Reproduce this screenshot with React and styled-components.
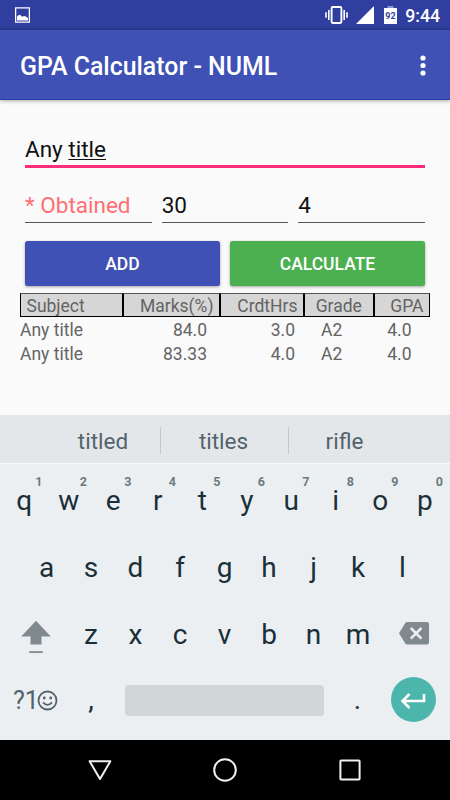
import React from "react";
import styled, { createGlobalStyle } from "styled-components";

const Global = createGlobalStyle`
  * { box-sizing: border-box; }
  body { margin: 0; font-family: Roboto, "Liberation Sans", sans-serif; background: #fafafa; }
`;

const Screen = styled.div`
  width: 450px;
  height: 800px;
  display: flex;
  flex-direction: column;
  background: #fafafa;
  overflow: hidden;
`;

const StatusBar = styled.header`
  height: 30px;
  padding: 0 10px 0 15px;
  display: flex;
  justify-content: space-between;
  background: linear-gradient(#303f9f 26px, #2b398f);
`;

const StatusIcons = styled.div`
  display: flex;
  align-items: flex-start;
`;

const Icon = styled.svg`
  display: block;
  flex: none;
  margin: ${(p) => p.$margin || "0"};
`;

const Clock = styled.span`
  color: #fff;
  font-size: 17.7px;
  font-weight: 500;
  line-height: 20px;
  margin: 6px 0 0 8px;
`;

const Toolbar = styled.div`
  height: 70px;
  flex: none;
  display: flex;
  align-items: center;
  justify-content: space-between;
  padding: 0 20px;
  background: #3f51b5;
  border-bottom: 1px solid #2a3da6;
  box-shadow: 0 1px 4px rgba(0, 0, 0, 0.32);
`;

const Title = styled.h1`
  margin: 4px 0 0;
  color: #fff;
  font-size: 24.9px;
  line-height: 30px;
  font-weight: 500;
`;

const Content = styled.main`
  height: 315px;
  flex: none;
  padding: 0 20px;
`;

const Form = styled.div`
  padding: 30px 5px 0;
`;

const Field = styled.div`
  flex: 1;
  height: ${(p) => (p.$focused ? "38px" : "35px")};
  padding-top: ${(p) => (p.$focused ? "5px" : "3px")};
  color: ${(p) => (p.$hint ? "#ff6e73" : "#111")};
  font-size: 22.5px;
  line-height: 28px;
  border-bottom: ${(p) => (p.$focused ? "3px solid #ff2b7c" : "1px solid #555")};
`;

const Composing = styled.span`
  text-decoration: underline;
  text-decoration-thickness: 1.25px;
  text-underline-offset: 2px;
  text-decoration-skip-ink: none;
`;

const FieldRow = styled.div`
  display: flex;
  gap: 10px;
  margin-top: 20px;
`;

const ButtonRow = styled.div`
  display: flex;
  gap: 10px;
  margin-top: 18px;
`;

const Button = styled.button`
  flex: 1;
  height: 45px;
  border: 0;
  border-radius: 2.5px;
  padding: 0;
  background: ${(p) => p.$color};
  box-shadow: 0 1px 3px rgba(0, 0, 0, 0.35);
  color: #fff;
  font: 500 17.5px/20px Roboto, sans-serif;
`;

const Grid = styled.div`
  display: grid;
  grid-template-columns: 103px 97px 84px 69.5px 56.5px;
  color: #646464;
  font-size: 17.5px;
`;

const HeadCell = styled.div`
  height: 24px;
  border: 1px solid #000;
  border-top-color: #555;
  background: #d6d6d6;
  padding: 0 5.5px;
  line-height: 25px;
  text-align: ${(p) => p.$align || "right"};
`;

const Cell = styled.div`
  height: 23.6px;
  line-height: 27px;
  padding-right: ${(p) => p.$right || 0}px;
  text-align: ${(p) => p.$align || "right"};
`;

const Table = styled.section`
  margin-top: 7px;
`;

const Keyboard = styled.section`
  height: 325px;
  flex: none;
  background: #eceff1;
`;

const Suggestions = styled.div`
  height: 49px;
  display: flex;
  align-items: center;
  justify-content: center;
  background: #e4e7e9;
  border-bottom: 1px solid #f7f8f9;
`;

const Suggestion = styled.div`
  width: ${(p) => p.$width}px;
  height: 27px;
  margin-top: 3px;
  padding-top: 1px;
  padding-left: ${(p) => p.$indent || 0}px;
  padding-right: ${(p) => p.$trail || 0}px;
  border-right: ${(p) => (p.$last ? "0" : "1px solid #c3cacd")};
  text-align: center;
  color: #52636b;
  font-size: 22.5px;
  line-height: 27px;
`;

const KeyRow = styled.div`
  height: 66.7px;
  display: flex;
  justify-content: center;
  padding-right: 1px;
`;

const Key = styled.div`
  position: relative;
  width: 44.5px;
  height: 66px;
  padding-top: ${(p) => p.$top || 20}px;
  text-align: center;
  color: #1a2f39;
  font-size: 28px;
  line-height: 33px;
`;

const KeyHint = styled.span`
  position: absolute;
  top: 10px;
  right: 4px;
  font-size: 12.5px;
  line-height: 15px;
  font-weight: 700;
  color: #6b7a80;
`;

const SideKey = styled.div`
  width: 67px;
  height: 66px;
  display: flex;
  justify-content: center;
`;

const BottomRow = styled.div`
  height: 72px;
  display: flex;
  align-items: flex-start;
`;

const SymbolKey = styled.div`
  width: 63px;
  display: flex;
  padding: 22px 0 0 13px;
  color: #52636b;
  font-size: 25px;
  line-height: 30px;
`;

const Punct = styled.div`
  width: ${(p) => p.$width}px;
  padding-top: 19px;
  text-align: center;
  color: #1a2f39;
  font-size: 28px;
  line-height: 33px;
`;

const SpaceBar = styled.div`
  width: 199px;
  height: 31px;
  margin: 21px 0 0 ${(p) => p.$offset}px;
  border-radius: 4px;
  background: #d0d5d8;
`;

const Enter = styled.div`
  width: 45px;
  height: 45px;
  margin-top: 13.3px;
  border-radius: 50%;
  background: #4db6ac;
`;

const NavBar = styled.nav`
  height: 60px;
  flex: none;
  background: #000;
  display: flex;
  justify-content: center;
  align-items: center;
  gap: 95px;
`;

const TOP = ["q", "w", "e", "r", "t", "y", "u", "i", "o", "p"];
const HOME = ["a", "s", "d", "f", "g", "h", "j", "k", "l"];
const LOW = ["z", "x", "c", "v", "b", "n", "m"];
const RESULTS = [
  { subject: "Any title", marks: "84.0", hours: "3.0", grade: "A2", gpa: "4.0" },
  { subject: "Any title", marks: "83.33", hours: "4.0", grade: "A2", gpa: "4.0" },
];

export default function App() {
  return (
    <>
      <Global />
      <Screen>
        <StatusBar>
          <Icon width="15" height="16" viewBox="0 0 15 16" $margin="7px 0 0">
            <path d="M.6.8h13.8v14.4H.6z" fill="none" stroke="#fff" strokeWidth="1.3" />
            <path d="M2 13.4V9.5l1.5-1.2L5 7.7l2 2.1 2-.8 2.4.8 1.6 1.5v2.1z" fill="#fff" />
          </Icon>
          <StatusIcons>
            <Icon width="23" height="18" viewBox="0 0 23 18" $margin="6px 0 0">
              <rect x="6.6" y="1" width="9.8" height="16" rx="1.2" fill="none" stroke="#fff" strokeWidth="1.9" />
              <path d="M3.8 4v10M19.2 4v10M1 6.3v5.4M22 6.3v5.4" stroke="#fff" strokeWidth="1.6" />
            </Icon>
            <Icon width="18" height="18" viewBox="0 0 18 18" $margin="6px 0 0 8px">
              <path d="M18 0v18H0z" fill="#fff" />
            </Icon>
            <Icon width="13" height="18" viewBox="0 0 13 18" $margin="6px 0 0 10px">
              <path d="M3.5 0h6v2h-6z" fill="#8f98cc" />
              <path d="M0 2h13v16H0z" fill="#fff" />
              <text x="6.5" y="12.6" textAnchor="middle" fontFamily="Roboto" fontSize="9" fontWeight="700" fill="#303f9f">92</text>
            </Icon>
            <Clock>9:44</Clock>
          </StatusIcons>
        </StatusBar>
        <Toolbar>
          <Title>GPA Calculator - NUML</Title>
          <Icon width="6" height="21" viewBox="0 0 6 21" $margin="1px 4.5px 0 0" fill="#fff">
            <circle cx="3" cy="3" r="2.6" />
            <circle cx="3" cy="10.5" r="2.6" />
            <circle cx="3" cy="18" r="2.6" />
          </Icon>
        </Toolbar>
        <Content>
          <Form>
            <Field $focused>Any <Composing>title</Composing></Field>
            <FieldRow>
              <Field $hint>* Obtained</Field>
              <Field>30</Field>
              <Field>4</Field>
            </FieldRow>
            <ButtonRow>
              <Button $color="#3f51b5">ADD</Button>
              <Button $color="#4caf50">CALCULATE</Button>
            </ButtonRow>
          </Form>
          <Table>
            <Grid>
              <HeadCell $align="left">Subject</HeadCell>
              <HeadCell>Marks(%)</HeadCell>
              <HeadCell>CrdtHrs</HeadCell>
              <HeadCell $align="center">Grade</HeadCell>
              <HeadCell>GPA</HeadCell>
              {RESULTS.map((r) => (
                <React.Fragment key={r.marks}>
                  <Cell $align="left">{r.subject}</Cell>
                  <Cell $right={13}>{r.marks}</Cell>
                  <Cell $right={9}>{r.hours}</Cell>
                  <Cell $align="center" $right={14}>{r.grade}</Cell>
                  <Cell $right={18.5}>{r.gpa}</Cell>
                </React.Fragment>
              ))}
            </Grid>
          </Table>
        </Content>
        <Keyboard>
          <Suggestions>
            <Suggestion $width={123} $indent={8}>titled</Suggestion>
            <Suggestion $width={128} $trail={2}>titles</Suggestion>
            <Suggestion $width={123} $trail={12} $last>rifle</Suggestion>
          </Suggestions>
          <KeyRow>
            {TOP.map((k, i) => (
              <Key key={k}>{k}<KeyHint>{(i + 1) % 10}</KeyHint></Key>
            ))}
          </KeyRow>
          <KeyRow>{HOME.map((k) => <Key key={k}>{k}</Key>)}</KeyRow>
          <KeyRow>
            <SideKey>
              <Icon width="30" height="34" viewBox="0 0 30 34" $margin="23px 0 0 2px" fill="#80898d">
                <path d="M15 .8 29.8 16.5H20.5v8H9.5v-8H.2z" />
                <path d="M8.2 31.2h13.6v1.8H8.2z" />
              </Icon>
            </SideKey>
            {LOW.map((k) => <Key key={k} $top={21}>{k}</Key>)}
            <SideKey>
              <Icon width="30" height="23" viewBox="0 0 30 23" $margin="24.5px 0 0 1px">
                <path d="M8 0h20q2 0 2 2v18.5q0 2-2 2H8q-1 0-1.7-1L0 11.2 6.3 1Q7 0 8 0z" fill="#80898d" />
                <path d="m11.8 6 10.6 10.6m0-10.6L11.8 16.6" stroke="#eceff1" strokeWidth="2.5" />
              </Icon>
            </SideKey>
          </KeyRow>
          <BottomRow>
            <SymbolKey>
              ?1
              <Icon width="21" height="21" viewBox="0 0 21 21" $margin="4px 0 0 -2px">
                <circle cx="10.5" cy="10.5" r="9" fill="none" stroke="#52636b" strokeWidth="1.8" />
                <circle cx="7.3" cy="8" r="1.4" fill="#52636b" />
                <circle cx="13.7" cy="8" r="1.4" fill="#52636b" />
                <path d="M6 12.4q4.5 5 9 0" fill="none" stroke="#52636b" strokeWidth="1.7" />
              </Icon>
            </SymbolKey>
            <Punct $width={56}>,</Punct>
            <SpaceBar $offset={6} />
            <Punct $width={67}>.</Punct>
            <Enter>
              <Icon width="45" height="45" viewBox="0 0 45 45" fill="none" stroke="#fff" strokeWidth="2.6">
                <path d="M33 17v7H12M18.5 17l-7 7 7 7" />
              </Icon>
            </Enter>
          </BottomRow>
        </Keyboard>
        <NavBar>
          <Icon width="30" height="30" viewBox="0 0 30 30" fill="none" stroke="#f0f0f0" strokeWidth="2" strokeLinejoin="round">
            <path d="M4.6 6.2h20.8L15 24z" />
          </Icon>
          <Icon width="30" height="30" viewBox="0 0 30 30" fill="none" stroke="#f0f0f0" strokeWidth="2">
            <circle cx="15" cy="15" r="10.8" />
          </Icon>
          <Icon width="30" height="30" viewBox="0 0 30 30" fill="none" stroke="#f0f0f0" strokeWidth="2">
            <rect x="5.4" y="5.4" width="19.2" height="19.2" rx="0.8" />
          </Icon>
        </NavBar>
      </Screen>
    </>
  );
}
